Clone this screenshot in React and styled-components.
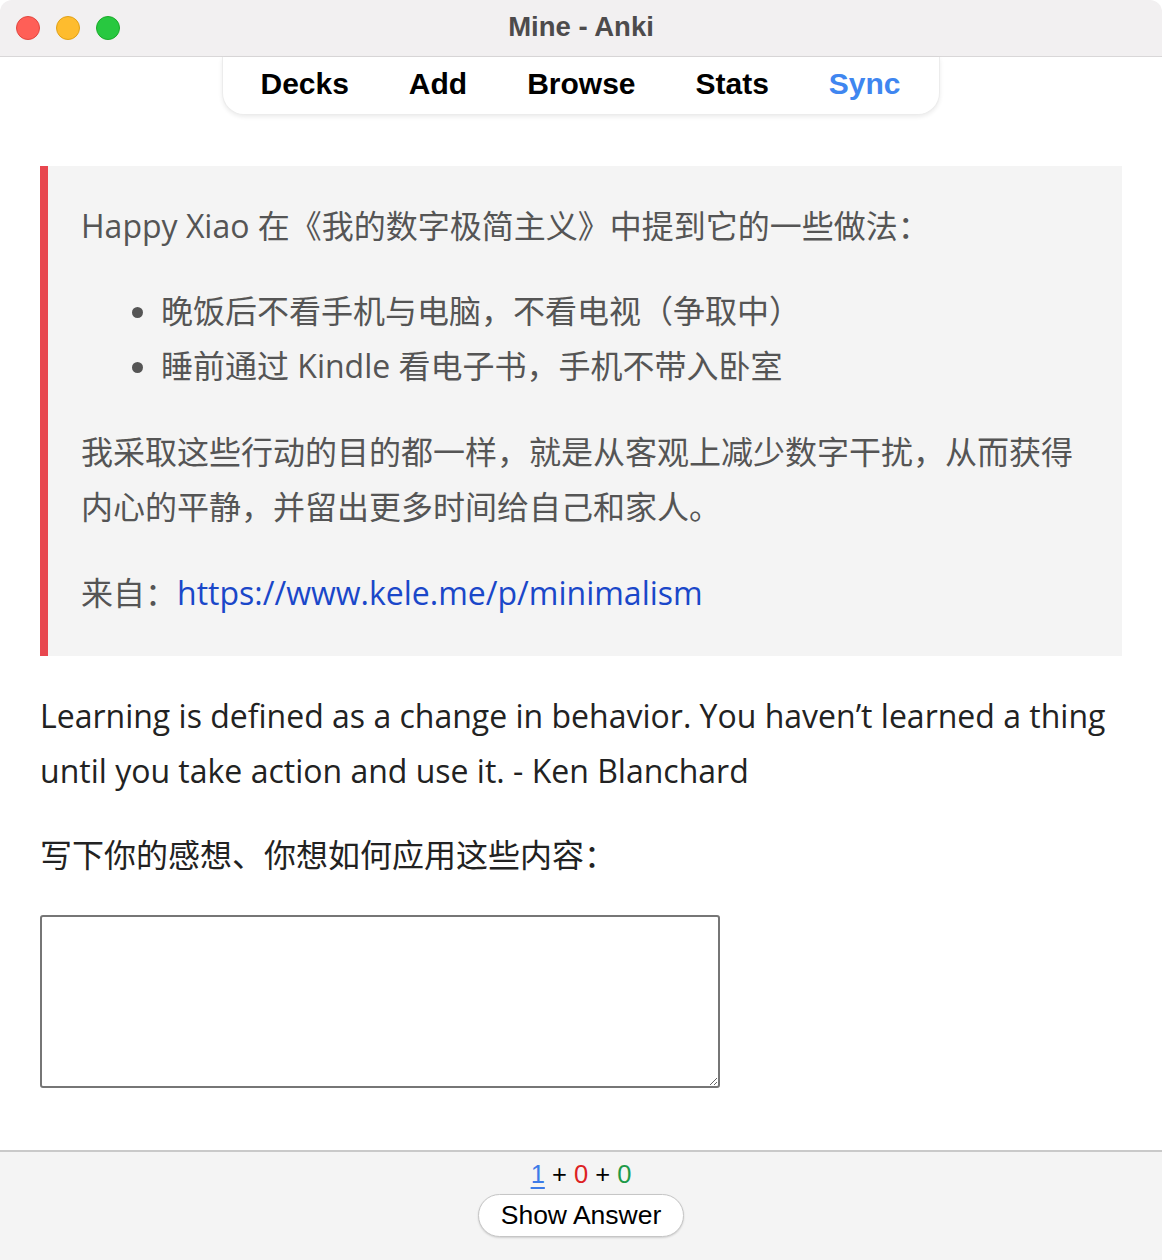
import React from "react";
import styled, { createGlobalStyle } from "styled-components";

const Global = createGlobalStyle`
  html, body { margin: 0; padding: 0; background: #ffffff; }
  body { width: 1162px; height: 1260px; overflow: hidden; }
  * { box-sizing: border-box; }
`;

const Window = styled.div`
  width: 1162px;
  height: 1260px;
  display: flex;
  flex-direction: column;
  background: #ffffff;
  border-radius: 12px 12px 0 0;
  overflow: hidden;
`;

const TitleBar = styled.div`
  height: 57px;
  flex: none;
  display: grid;
  grid-template-columns: 200px 1fr 200px;
  align-items: center;
  background: #f2f0f1;
  border-bottom: 1px solid #d9d7d8;
  padding: 0 16px;
`;

const Lights = styled.div`
  display: flex;
  gap: 16px;
`;

const Light = styled.span`
  width: 24px;
  height: 24px;
  border-radius: 50%;
  background: ${(p) => p.$c};
  border: 1px solid ${(p) => p.$b};
`;

const Title = styled.div`
  text-align: center;
  font-family: "Liberation Sans", Arial, sans-serif;
  font-weight: 700;
  font-size: 27.5px;
  color: #4d4b4c;
  margin-top: -2px;
`;

const ToolbarWrap = styled.div`
  display: flex;
  justify-content: center;
  flex: none;
`;

const Toolbar = styled.nav`
  width: 718px;
  height: 58px;
  margin-left: -1px;
  display: flex;
  justify-content: space-between;
  align-items: center;
  padding: 0 36px 4px 36px;
  background: #ffffff;
  border: 1px solid #ececec;
  border-top: none;
  border-radius: 0 0 22px 22px;
  box-shadow: 0 2px 4px rgba(0, 0, 0, 0.08);
`;

const NavItem = styled.span`
  font-family: "Liberation Sans", Arial, sans-serif;
  font-weight: 700;
  font-size: 30px;
  color: ${(p) => (p.$accent ? "#3f86f0" : "#000000")};
  padding: 0 2px;
`;

const Content = styled.main`
  flex: 1;
  padding: 51px 40px 0 40px;
  font-family: "Open Sans", "Noto Sans CJK SC", sans-serif;
  font-size: 32px;
  line-height: 55px;
  color: #222222;
`;

const Quote = styled.blockquote`
  margin: 0;
  padding: 32px 32px 36px 33px;
  background: #f4f4f4;
  border-left: 8px solid #e8474f;
  color: #555555;
  width: 1082px;
`;

const QuoteP = styled.p`
  margin: 0;
  & + & { margin-top: 31px; }
`;

const List = styled.ul`
  margin: 30px 0 31px 0;
  padding-left: 80px;
  list-style: disc;
  & li::marker { color: #555555; }
`;

const Link = styled.a`
  color: #1a47c9;
  text-decoration: none;
`;

const Para = styled.p`
  margin: 32px 0 0 0;
  color: #222222;
  white-space: nowrap;
`;

const Prompt = styled.p`
  margin: 29px 0 0 0;
  color: #222222;
`;

const Answer = styled.textarea`
  display: block;
  margin-top: 33px;
  width: 680px;
  height: 173px;
  border: 2px solid #767676;
  border-radius: 3px;
  background: #ffffff;
  font-family: inherit;
  font-size: 16px;
`;

const Footer = styled.footer`
  flex: none;
  height: 110px;
  border-top: 2px solid #c9c9c9;
  background: #f4f4f4;
  display: flex;
  flex-direction: column;
  align-items: center;
  padding-top: 7px;
  font-family: "Liberation Sans", Arial, sans-serif;
  font-size: 25.5px;
`;

const Counts = styled.div`
  line-height: 30px;
  color: #000000;
`;

const Count = styled.span`
  color: ${(p) => p.$c};
  text-decoration: ${(p) => (p.$u ? "underline" : "none")};
  text-underline-offset: 4px;
  text-decoration-thickness: 2px;
`;

const ShowButton = styled.button`
  margin-top: 5px;
  width: 206px;
  height: 43px;
  border-radius: 22px;
  border: 1px solid #c6c6c6;
  background: #ffffff;
  box-shadow: 0 1px 2px rgba(0, 0, 0, 0.15);
  font-family: "Liberation Sans", Arial, sans-serif;
  font-size: 26.5px;
  color: #000000;
  padding: 0;
`;

export default function App() {
  return (
    <>
      <Global />
      <Window>
        <TitleBar>
          <Lights>
            <Light $c="#ff5f57" $b="#e2463f" />
            <Light $c="#febc2e" $b="#e1a116" />
            <Light $c="#28c840" $b="#1aab29" />
          </Lights>
          <Title>Mine - Anki</Title>
          <div />
        </TitleBar>
        <ToolbarWrap>
          <Toolbar>
            <NavItem>Decks</NavItem>
            <NavItem>Add</NavItem>
            <NavItem>Browse</NavItem>
            <NavItem>Stats</NavItem>
            <NavItem $accent>Sync</NavItem>
          </Toolbar>
        </ToolbarWrap>
        <Content>
          <Quote>
            <QuoteP>Happy Xiao 在《我的数字极简主义》中提到它的一些做法：</QuoteP>
            <List>
              <li>晚饭后不看手机与电脑，不看电视（争取中）</li>
              <li>睡前通过 Kindle 看电子书，手机不带入卧室</li>
            </List>
            <QuoteP>
              我采取这些行动的目的都一样，就是从客观上减少数字干扰，从而获得内心的平静，并留出更多时间给自己和家人。
            </QuoteP>
            <QuoteP>
              来自：<Link href="#">https://www.kele.me/p/minimalism</Link>
            </QuoteP>
          </Quote>
          <Para>
            Learning is defined as a change in behavior. You haven’t learned a thing
            <br />
            until you take action and use it. - Ken Blanchard
          </Para>
          <Prompt>写下你的感想、你想如何应用这些内容：</Prompt>
          <Answer />
        </Content>
        <Footer>
          <Counts>
            <Count $c="#3d7be8" $u>1</Count> + <Count $c="#dd2222">0</Count> +{" "}
            <Count $c="#1e9a49">0</Count>
          </Counts>
          <ShowButton>Show Answer</ShowButton>
        </Footer>
      </Window>
    </>
  );
}
